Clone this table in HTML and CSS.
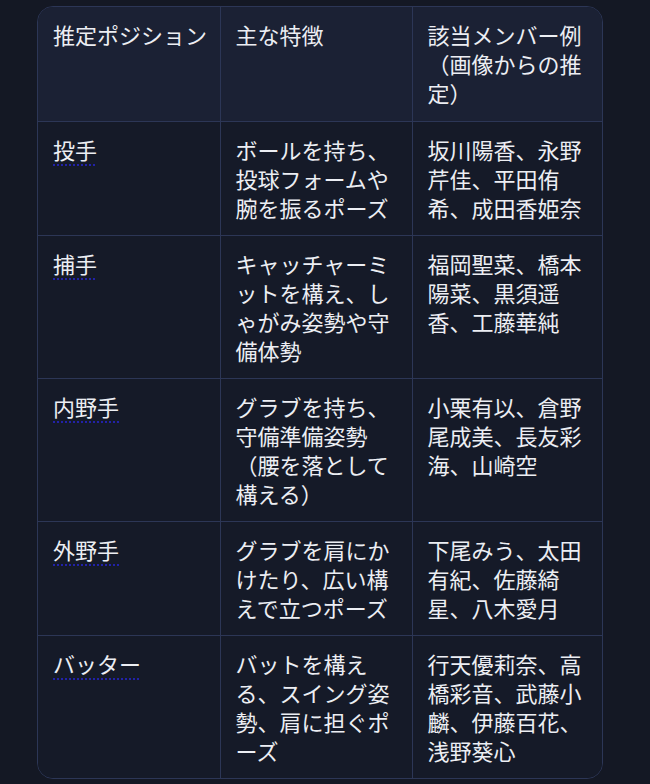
FILE: index.html
```html
<!DOCTYPE html>
<html lang="ja">
<head>
<meta charset="utf-8">
<link rel="stylesheet" href="styles.css">
</head>
<body>
<div class="wrap">
<table class="tbl">
<colgroup><col class="c1"><col class="c2"><col class="c3"></colgroup>
<thead>
<tr><th>推定ポジション</th><th>主な特徴</th><th>該当メンバー例（画像からの推定）</th></tr>
</thead>
<tbody>
<tr><td><span class="pos">投手</span></td><td>ボールを持ち、投球フォームや腕を振るポーズ</td><td>坂川陽香、永野芹佳、平田侑希、成田香姫奈</td></tr>
<tr><td><span class="pos">捕手</span></td><td>キャッチャーミットを構え、しゃがみ姿勢や守備体勢</td><td>福岡聖菜、橋本陽菜、黒須遥香、工藤華純</td></tr>
<tr><td><span class="pos">内野手</span></td><td>グラブを持ち、守備準備姿勢（腰を落として構える）</td><td>小栗有以、倉野尾成美、長友彩海、山崎空</td></tr>
<tr><td><span class="pos">外野手</span></td><td>グラブを肩にかけたり、広い構えで立つポーズ</td><td>下尾みう、太田有紀、佐藤綺星、八木愛月</td></tr>
<tr><td><span class="pos">バッター</span></td><td>バットを構える、スイング姿勢、肩に担ぐポーズ</td><td>行天優莉奈、高橋彩音、武藤小麟、伊藤百花、浅野葵心</td></tr>
</tbody>
</table>
</div>
</body>
</html>
```
FILE: styles.css
```css
html, body {
  margin: 0;
  padding: 0;
  background: #141824;
  height: 100%;
}
body {
  font-family: "Noto Sans CJK JP", "Noto Sans", sans-serif;
  color: #eceef3;
  overflow: hidden;
}
.wrap {
  margin: 6px 0 0 37px;
  width: 566px;
  border: 1px solid #2c3656;
  border-radius: 16px;
  overflow: hidden;
  box-sizing: border-box;
}
.tbl {
  width: 100%;
  border-collapse: collapse;
  table-layout: fixed;
  font-size: 22px;
  line-height: 29px;
}
.c1 { width: 182px; }
.c2 { width: 192px; }
.c3 { width: 190px; }
.tbl th, .tbl td {
  padding: 13px 10px 13px 15px;
  text-align: left;
  vertical-align: top;
  font-weight: normal;
  border-right: 1px solid #2c3656;
  border-bottom: 1px solid #2c3656;
  word-break: break-all;
}
.tbl th:last-child, .tbl td:last-child { border-right: none; }
.tbl tbody tr:last-child td { border-bottom: none; }
.tbl thead th {
  background: #1b2134;
  padding-bottom: 14px;
}
.tbl tbody td { background: #151a28; }
.pos {
  text-decoration: underline dotted #2222a8;
  text-decoration-thickness: 2px;
  text-underline-offset: 5px;
}
```
